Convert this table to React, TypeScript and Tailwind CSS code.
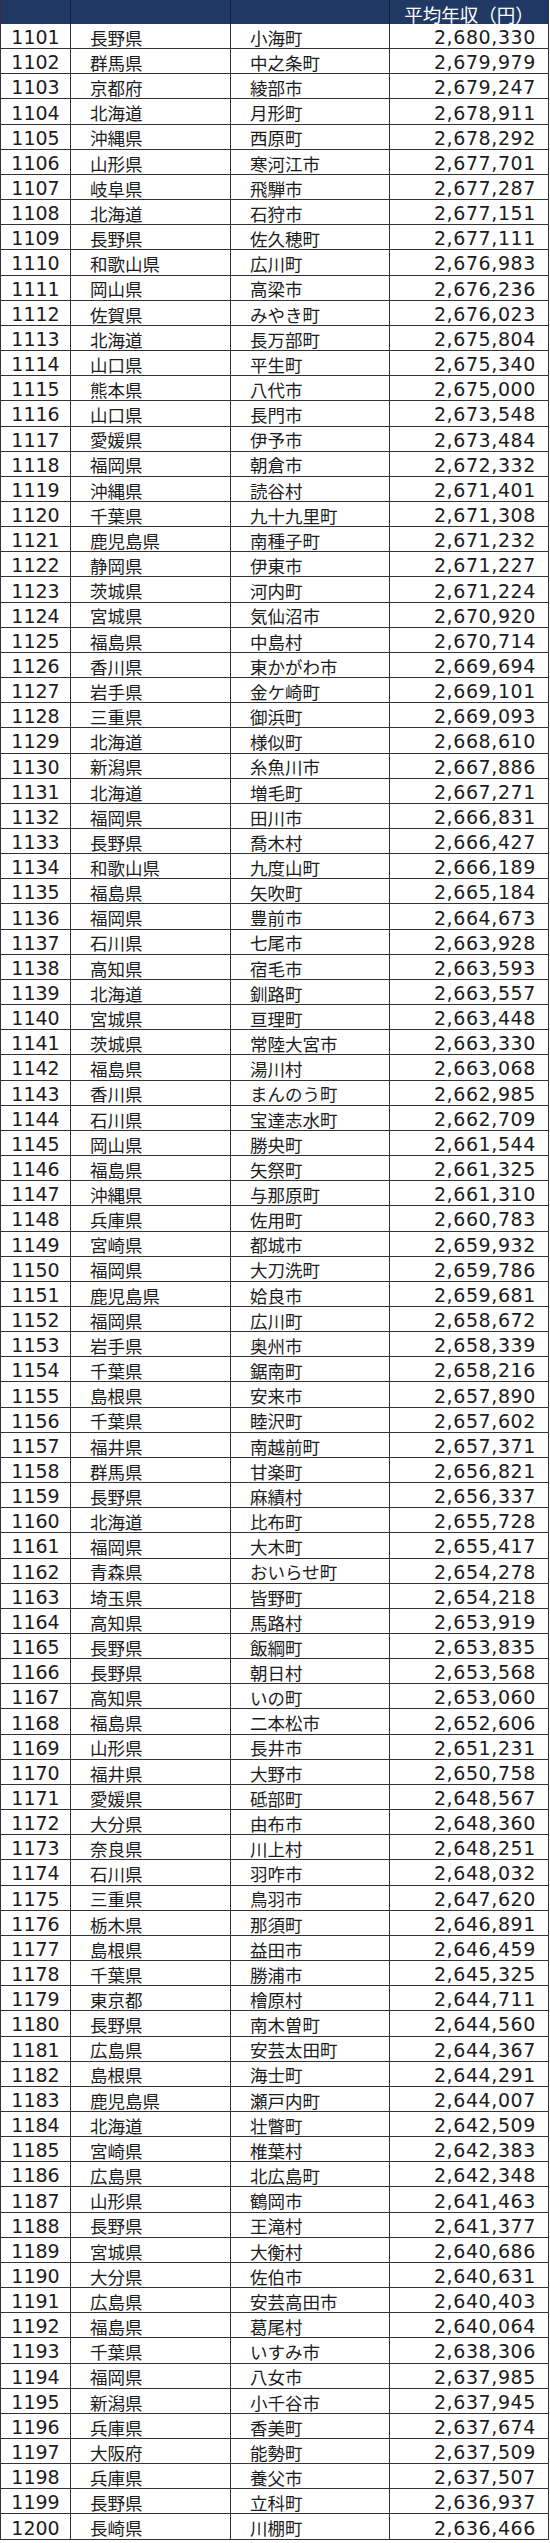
const rows: [string, string, string][] = [
  ["長野県", "小海町", "2,680,330"],
  ["群馬県", "中之条町", "2,679,979"],
  ["京都府", "綾部市", "2,679,247"],
  ["北海道", "月形町", "2,678,911"],
  ["沖縄県", "西原町", "2,678,292"],
  ["山形県", "寒河江市", "2,677,701"],
  ["岐阜県", "飛騨市", "2,677,287"],
  ["北海道", "石狩市", "2,677,151"],
  ["長野県", "佐久穂町", "2,677,111"],
  ["和歌山県", "広川町", "2,676,983"],
  ["岡山県", "高梁市", "2,676,236"],
  ["佐賀県", "みやき町", "2,676,023"],
  ["北海道", "長万部町", "2,675,804"],
  ["山口県", "平生町", "2,675,340"],
  ["熊本県", "八代市", "2,675,000"],
  ["山口県", "長門市", "2,673,548"],
  ["愛媛県", "伊予市", "2,673,484"],
  ["福岡県", "朝倉市", "2,672,332"],
  ["沖縄県", "読谷村", "2,671,401"],
  ["千葉県", "九十九里町", "2,671,308"],
  ["鹿児島県", "南種子町", "2,671,232"],
  ["静岡県", "伊東市", "2,671,227"],
  ["茨城県", "河内町", "2,671,224"],
  ["宮城県", "気仙沼市", "2,670,920"],
  ["福島県", "中島村", "2,670,714"],
  ["香川県", "東かがわ市", "2,669,694"],
  ["岩手県", "金ケ崎町", "2,669,101"],
  ["三重県", "御浜町", "2,669,093"],
  ["北海道", "様似町", "2,668,610"],
  ["新潟県", "糸魚川市", "2,667,886"],
  ["北海道", "増毛町", "2,667,271"],
  ["福岡県", "田川市", "2,666,831"],
  ["長野県", "喬木村", "2,666,427"],
  ["和歌山県", "九度山町", "2,666,189"],
  ["福島県", "矢吹町", "2,665,184"],
  ["福岡県", "豊前市", "2,664,673"],
  ["石川県", "七尾市", "2,663,928"],
  ["高知県", "宿毛市", "2,663,593"],
  ["北海道", "釧路町", "2,663,557"],
  ["宮城県", "亘理町", "2,663,448"],
  ["茨城県", "常陸大宮市", "2,663,330"],
  ["福島県", "湯川村", "2,663,068"],
  ["香川県", "まんのう町", "2,662,985"],
  ["石川県", "宝達志水町", "2,662,709"],
  ["岡山県", "勝央町", "2,661,544"],
  ["福島県", "矢祭町", "2,661,325"],
  ["沖縄県", "与那原町", "2,661,310"],
  ["兵庫県", "佐用町", "2,660,783"],
  ["宮崎県", "都城市", "2,659,932"],
  ["福岡県", "大刀洗町", "2,659,786"],
  ["鹿児島県", "姶良市", "2,659,681"],
  ["福岡県", "広川町", "2,658,672"],
  ["岩手県", "奥州市", "2,658,339"],
  ["千葉県", "鋸南町", "2,658,216"],
  ["島根県", "安来市", "2,657,890"],
  ["千葉県", "睦沢町", "2,657,602"],
  ["福井県", "南越前町", "2,657,371"],
  ["群馬県", "甘楽町", "2,656,821"],
  ["長野県", "麻績村", "2,656,337"],
  ["北海道", "比布町", "2,655,728"],
  ["福岡県", "大木町", "2,655,417"],
  ["青森県", "おいらせ町", "2,654,278"],
  ["埼玉県", "皆野町", "2,654,218"],
  ["高知県", "馬路村", "2,653,919"],
  ["長野県", "飯綱町", "2,653,835"],
  ["長野県", "朝日村", "2,653,568"],
  ["高知県", "いの町", "2,653,060"],
  ["福島県", "二本松市", "2,652,606"],
  ["山形県", "長井市", "2,651,231"],
  ["福井県", "大野市", "2,650,758"],
  ["愛媛県", "砥部町", "2,648,567"],
  ["大分県", "由布市", "2,648,360"],
  ["奈良県", "川上村", "2,648,251"],
  ["石川県", "羽咋市", "2,648,032"],
  ["三重県", "鳥羽市", "2,647,620"],
  ["栃木県", "那須町", "2,646,891"],
  ["島根県", "益田市", "2,646,459"],
  ["千葉県", "勝浦市", "2,645,325"],
  ["東京都", "檜原村", "2,644,711"],
  ["長野県", "南木曽町", "2,644,560"],
  ["広島県", "安芸太田町", "2,644,367"],
  ["島根県", "海士町", "2,644,291"],
  ["鹿児島県", "瀬戸内町", "2,644,007"],
  ["北海道", "壮瞥町", "2,642,509"],
  ["宮崎県", "椎葉村", "2,642,383"],
  ["広島県", "北広島町", "2,642,348"],
  ["山形県", "鶴岡市", "2,641,463"],
  ["長野県", "王滝村", "2,641,377"],
  ["宮城県", "大衡村", "2,640,686"],
  ["大分県", "佐伯市", "2,640,631"],
  ["広島県", "安芸高田市", "2,640,403"],
  ["福島県", "葛尾村", "2,640,064"],
  ["千葉県", "いすみ市", "2,638,306"],
  ["福岡県", "八女市", "2,637,985"],
  ["新潟県", "小千谷市", "2,637,945"],
  ["兵庫県", "香美町", "2,637,674"],
  ["大阪府", "能勢町", "2,637,509"],
  ["兵庫県", "養父市", "2,637,507"],
  ["長野県", "立科町", "2,636,937"],
  ["長崎県", "川棚町", "2,636,466"],
];

const num = "font-['DejaVu_Sans','Noto_Sans_CJK_JP',sans-serif] text-[19px]";
const jp = "font-['Noto_Sans_CJK_JP',sans-serif] text-[17.5px]";

export default function App() {
  return (
    <div className="w-[550px] bg-white text-[#1c1c1c]">
      <div className="w-[549px] border-l border-[#333]">
        {/* header */}
        <div className="grid h-[24px] grid-cols-[70px_160px_159px_159px] bg-[#203864]">
          <div className="border-r border-[#121d33]" />
          <div className="border-r border-[#121d33]" />
          <div className="border-r border-[#121d33]" />
          <div className="flex items-end justify-center border-r border-[#333] pb-[1px] font-['Noto_Sans_CJK_JP',sans-serif] text-[18.5px] leading-none text-white">
            平均年収（円）
          </div>
        </div>

        {rows.map(([pref, city, income], i) => (
          <div
            key={i}
            className="grid h-[25.16px] grid-cols-[70px_160px_159px_159px] leading-none"
          >
            <div className={`flex items-center justify-center border-r border-b border-[#333] pt-[3px] ${num}`}>
              {1101 + i}
            </div>
            <div className={`flex items-center border-r border-b border-[#333] pt-[3px] pl-[19px] ${jp}`}>
              {pref}
            </div>
            <div className={`flex items-center border-r border-b border-[#333] pt-[3px] pl-[19px] ${jp}`}>
              {city}
            </div>
            <div className={`flex items-center justify-end border-r border-b border-[#333] pt-[3px] pr-[12px] tracking-[0.6px] ${num}`}>
              {income}
            </div>
          </div>
        ))}
      </div>
    </div>
  );
}
